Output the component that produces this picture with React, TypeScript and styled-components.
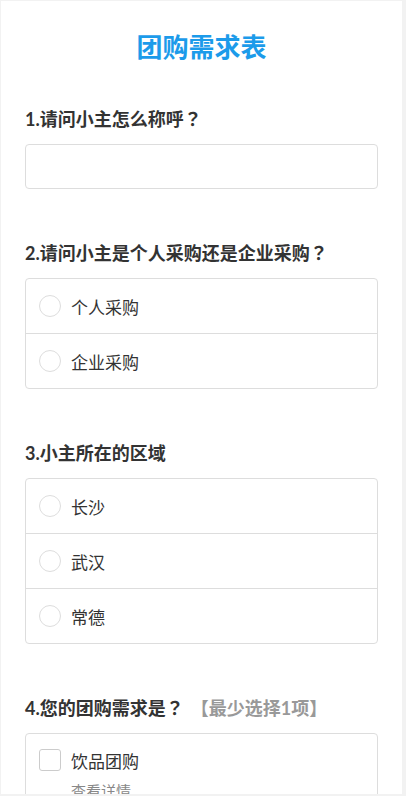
import React from 'react'
import styled, { createGlobalStyle } from 'styled-components'

const GlobalStyle = createGlobalStyle`
  html, body {
    margin: 0;
    padding: 0;
    background: #f2f2f2;
  }
  * {
    box-sizing: border-box;
  }
`

const Frame = styled.div`
  padding: 1px 4px 2px 1px;
  height: 796px;
  overflow: hidden;
`

const Sheet = styled.div`
  background: #fff;
  height: 100%;
  overflow: hidden;
  padding: 0 24px;
  font-family: 'Noto Sans CJK SC', Lato, sans-serif;
  color: #333;
`

const Title = styled.h1`
  margin: 0;
  padding-top: 29px;
  font-size: 26px;
  line-height: 32px;
  font-weight: 700;
  text-align: center;
  color: #1c9bea;
`

const Section = styled.section<{ first?: boolean }>`
  margin-top: ${(p) => (p.first ? '44px' : '51px')};
`

const Question = styled.h2`
  margin: 0 0 13px;
  font-size: 18px;
  line-height: 24px;
  font-weight: 700;
  color: #333;
`

const Num = styled.span`
  font-family: Lato, 'Noto Sans CJK SC', sans-serif;
`

// centred full-width question mark, as in the traditional glyph set
const Mark = styled.span`
  font-family: 'Noto Sans CJK TC', 'Noto Sans CJK SC', sans-serif;
`

const Hint = styled.span`
  margin-left: 7px;
  color: #999;
  font-weight: 700;
`

const TextInput = styled.input`
  display: block;
  width: 100%;
  height: 45px;
  border: 1px solid #ddd;
  border-radius: 4px;
  padding: 0 12px;
  font-size: 16px;
  outline: none;
`

const Group = styled.div`
  border: 1px solid #ddd;
  border-radius: 4px;
  overflow: hidden;
`

const Row = styled.label`
  display: flex;
  align-items: center;
  gap: 10px;
  height: 55px;
  padding: 0 13px;
  border-top: 1px solid #ddd;
  font-size: 17px;
  color: #333;
  &:first-child {
    border-top: none;
    height: 54px;
  }
`

const CheckRow = styled.div`
  padding: 14px 13px 0;
`

const CheckLine = styled.label`
  display: flex;
  align-items: center;
  gap: 10px;
  height: 24px;
  font-size: 17px;
  color: #333;
`

const Circle = styled.span`
  width: 22px;
  height: 22px;
  border: 1px solid #ddd;
  border-radius: 50%;
  flex: none;
`

const Square = styled.span`
  width: 22px;
  height: 22px;
  border: 1px solid #ccc;
  border-radius: 3px;
  flex: none;
`

const Detail = styled.div`
  margin: 8px 0 0 32px;
  font-size: 15px;
  color: #888;
`

const RadioGroup = ({ options }: { options: string[] }) => (
  <Group>
    {options.map((o) => (
      <Row key={o}>
        <Circle />
        {o}
      </Row>
    ))}
  </Group>
)

export default function App() {
  return (
    <Frame>
      <GlobalStyle />
      <Sheet>
        <Title>团购需求表</Title>
        <Section first>
          <Question>
            <Num>1.</Num>请问小主怎么称呼<Mark>？</Mark>
          </Question>
          <TextInput />
        </Section>
        <Section>
          <Question>
            <Num>2.</Num>请问小主是个人采购还是企业采购<Mark>？</Mark>
          </Question>
          <RadioGroup options={['个人采购', '企业采购']} />
        </Section>
        <Section>
          <Question>
            <Num>3.</Num>小主所在的区域
          </Question>
          <RadioGroup options={['长沙', '武汉', '常德']} />
        </Section>
        <Section>
          <Question>
            <Num>4.</Num>您的团购需求是<Mark>？</Mark>
            <Hint>【最少选择<Num>1</Num>项】</Hint>
          </Question>
          <Group>
            <CheckRow>
              <CheckLine>
                <Square />
                饮品团购
              </CheckLine>
              <Detail>查看详情</Detail>
            </CheckRow>
          </Group>
        </Section>
      </Sheet>
    </Frame>
  )
}
